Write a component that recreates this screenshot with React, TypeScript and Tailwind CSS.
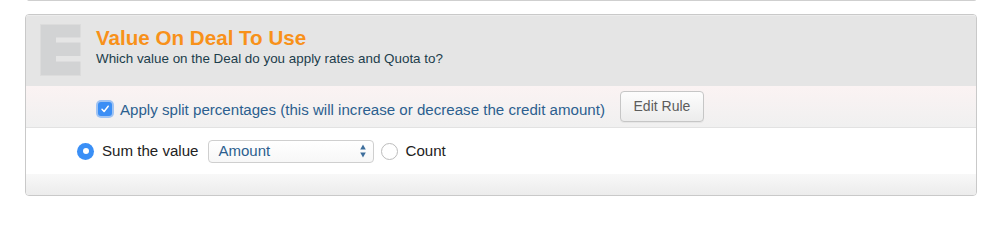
import React from "react";

function EIcon() {
  return (
    <svg width="41" height="52" viewBox="0 0 41 52" className="shrink-0">
      <rect x="0.5" y="0.5" width="40" height="51" fill="#d2d3d4" stroke="#dcdcdc" />
      <rect x="16" y="13.5" width="25" height="5" fill="#e5e5e5" />
      <rect x="16" y="32" width="25" height="5.5" fill="#e5e5e5" />
    </svg>
  );
}

export default function App() {
  return (
    <div
      className="w-[999px] h-[226px] bg-white overflow-hidden"
      style={{ fontFamily: '"Liberation Sans", Arial, Helvetica, sans-serif' }}
    >
      <div className="ml-[27px] w-[949px] h-[2px] border-x border-b border-[#cfcfcf] rounded-b-[3px] -mt-[1px]" />
      <div className="ml-[25px] mt-[13px] w-[952px] border border-[#c9c9c9] rounded-[4px] overflow-hidden">
        <div className="h-[71px] bg-[#e5e5e5] flex items-start pl-[14px] pt-[8px] border-t border-[#ececec]">
          <EIcon />
          <div className="ml-[15px] pt-[2px]">
            <div className="text-[20.6px] leading-[24px] font-bold text-[#f8911a]">Value On Deal To Use</div>
            <div className="text-[13.4px] leading-[17px] text-[#1c3d4b]">
              Which value on the Deal do you apply rates and Quota to?
            </div>
          </div>
        </div>
        <div className="h-[42px] bg-gradient-to-b from-[#fbf3f3] to-[#f0f0f0] border-b border-[#e2e2e2] flex items-center pl-[72px]">
          <span className="mt-[4px] w-[14px] h-[14px] rounded-[3px] bg-[#3b8ef5] shadow-[0_0_0_2px_#9fc3f3] flex items-center justify-center shrink-0">
            <svg width="10" height="10" viewBox="0 0 10 10">
              <path d="M2 5.3 L4.1 7.5 L8.2 2.2" fill="none" stroke="white" strokeWidth="1.5" strokeLinecap="round" strokeLinejoin="round" />
            </svg>
          </span>
          <span className="ml-[8px] mt-[8px] text-[15.1px] text-[#2c5f8f]">
            Apply split percentages (this will increase or decrease the credit amount)
          </span>
          <button className="ml-[15px] w-[84px] h-[31px] rounded-[4px] border border-[#c6c6c6] bg-gradient-to-b from-[#fdfdfd] to-[#ececec] text-[14px] text-[#5c5c5c] shadow-[0_1px_0_#e6e6e6]">
            Edit Rule
          </button>
        </div>
        <div className="h-[46px] bg-white flex items-center pl-[51px]">
          <span className="w-[17px] h-[17px] rounded-full bg-[#3a8ff6] flex items-center justify-center shrink-0">
            <span className="w-[6px] h-[6px] rounded-full bg-white" />
          </span>
          <span className="ml-[8px] text-[15.1px] text-[#222]">Sum the value</span>
          <div className="ml-[9px] w-[166px] h-[23px] rounded-[4px] border border-[#cfcfcf] bg-gradient-to-b from-white to-[#f7f7f7] flex items-center justify-between pl-[10px] pr-[7px]">
            <span className="text-[15px] text-[#2c5f8f]">Amount</span>
            <svg width="6" height="14" viewBox="0 0 6 14">
              <path d="M3 0.5 L5.8 5.5 L0.2 5.5 Z" fill="#3d6e9c" />
              <path d="M3 13.5 L5.8 8.5 L0.2 8.5 Z" fill="#3d6e9c" />
            </svg>
          </div>
          <span className="ml-[7px] w-[17px] h-[17px] rounded-full border border-[#bcbcbc] bg-white shrink-0" />
          <span className="ml-[8px] text-[15.1px] text-[#222]">Count</span>
        </div>
        <div className="h-[21px] bg-gradient-to-b from-[#f8f8f8] to-[#ececec]" />
      </div>
    </div>
  );
}
